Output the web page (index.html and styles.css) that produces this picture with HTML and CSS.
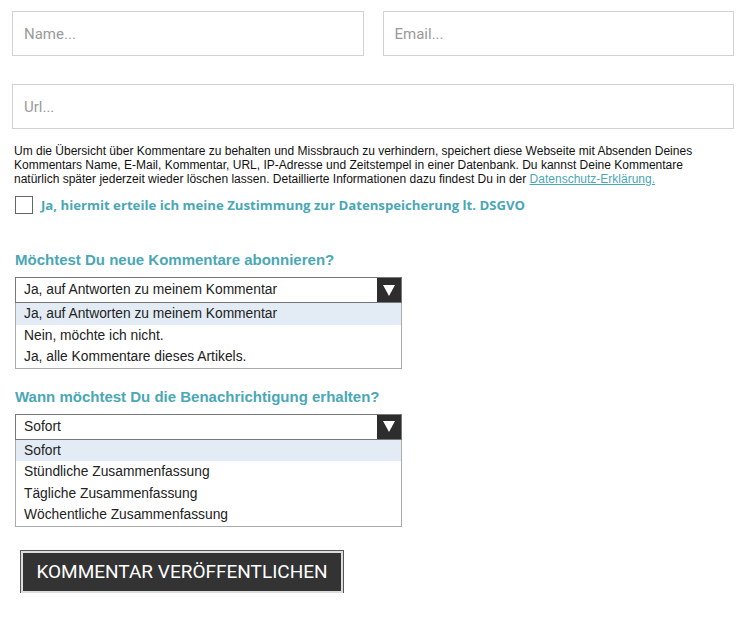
FILE: index.html
```html
<!DOCTYPE html>
<html lang="de">
<head>
    <meta charset="UTF-8">
    <title>Kommentar</title>
    <link rel="stylesheet" href="styles.css">
</head>
<body>
    <form class="comment-form">
        <div class="field-row">
            <input type="text" class="field" placeholder="Name...">
            <input type="text" class="field" placeholder="Email...">
        </div>
        <input type="text" class="field field-url" placeholder="Url...">

        <p class="privacy">Um die Übersicht über Kommentare zu behalten und Missbrauch zu verhindern, speichert diese Webseite mit Absenden Deines Kommentars Name, E-Mail, Kommentar, URL, IP-Adresse und Zeitstempel in einer Datenbank. Du kannst Deine Kommentare natürlich später jederzeit wieder löschen lassen. Detaillierte Informationen dazu findest Du in der <a href="#">Datenschutz-Erklärung.</a></p>

        <label class="consent">
            <span class="check"></span>
            Ja, hiermit erteile ich meine Zustimmung zur Datenspeicherung lt. DSGVO
        </label>

        <h3 class="question q-first">Möchtest Du neue Kommentare abonnieren?</h3>
        <div class="dropdown">
            <div class="select">
                <span>Ja, auf Antworten zu meinem Kommentar</span>
                <span class="arrow"></span>
            </div>
            <ul class="options">
                <li class="selected">Ja, auf Antworten zu meinem Kommentar</li>
                <li>Nein, möchte ich nicht.</li>
                <li>Ja, alle Kommentare dieses Artikels.</li>
            </ul>
        </div>

        <h3 class="question">Wann möchtest Du die Benachrichtigung erhalten?</h3>
        <div class="dropdown">
            <div class="select">
                <span>Sofort</span>
                <span class="arrow"></span>
            </div>
            <ul class="options">
                <li class="selected">Sofort</li>
                <li>Stündliche Zusammenfassung</li>
                <li>Tägliche Zusammenfassung</li>
                <li>Wöchentliche Zusammenfassung</li>
            </ul>
        </div>

        <button type="button" class="submit">KOMMENTAR VERÖFFENTLICHEN</button>
    </form>
</body>
</html>
```

FILE: styles.css
```css
body {
    margin: 0;
    background-color: #fff;
    font-family: 'Liberation Sans', Arial, sans-serif;
    color: #222;
}

.comment-form {
    width: 722px;
    padding: 11px 0 0 12px;
}

.field-row {
    display: flex;
    gap: 19px;
}

.field {
    flex: 1;
    height: 45px;
    box-sizing: border-box;
    border: 1px solid #d2d2d2;
    padding: 0 11px;
    font-family: Roboto, sans-serif;
    font-size: 15px;
    color: #333;
    outline: none;
}

.field::placeholder {
    color: #9a9a9a;
}

.field-url {
    display: block;
    width: 100%;
    margin-top: 28px;
}

.privacy {
    width: 690px;
    margin: 15px 0 0 2px;
    font-size: 12px;
    line-height: 14px;
    color: #111;
}

.privacy a {
    color: #4aa7b6;
    text-decoration: underline;
}

.consent {
    display: flex;
    align-items: center;
    gap: 8px;
    margin: 10px 0 0 3px;
    font-family: 'Open Sans', sans-serif;
    font-weight: bold;
    font-size: 13.2px;
    color: #4aa7b6;
}

.check {
    width: 16px;
    height: 16px;
    border: 1px solid #666;
    background-color: #fff;
}

.question {
    margin: 19px 0 9px 3px;
    font-size: 15px;
    font-weight: bold;
    color: #4aa7b6;
}

.question.q-first {
    margin-top: 37px;
}

.dropdown {
    width: 387px;
    margin-left: 3px;
    font-size: 13.8px;
}

.select {
    display: flex;
    justify-content: space-between;
    align-items: stretch;
    height: 26px;
    box-sizing: border-box;
    border: 1px solid #777;
    background-color: #fff;
}

.select span:first-child {
    padding-left: 8px;
    line-height: 24px;
}

.arrow {
    width: 24px;
    background-color: #2d2d2d;
    display: flex;
    align-items: center;
    justify-content: center;
}

.arrow::after {
    content: "";
    border-left: 6px solid transparent;
    border-right: 6px solid transparent;
    border-top: 11px solid #fff;
}

.options {
    list-style: none;
    margin: 0;
    padding: 0;
    border: 1px solid #aaa;
    border-top: none;
}

.options li {
    height: 21.5px;
    line-height: 21.5px;
    padding-left: 8px;
}

.options li.selected {
    background-color: #e3ecf4;
}

.submit {
    display: block;
    margin: 24px 0 0 9px;
    width: 322px;
    height: 42px;
    background-color: #333;
    border: 2px solid #ddd;
    outline: 1px solid #555;
    color: #fff;
    font-family: Roboto, sans-serif;
    font-size: 19px;
    cursor: pointer;
}
```
